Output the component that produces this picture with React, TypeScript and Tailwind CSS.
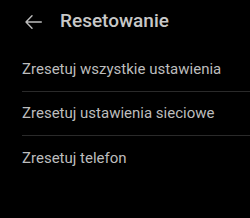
export default function App() {
  const items = ['Zresetuj wszystkie ustawienia', 'Zresetuj ustawienia sieciowe', 'Zresetuj telefon'];
  return (
    <div className="w-[250px] h-[218px] bg-black overflow-hidden" style={{ fontFamily: 'Roboto, "Noto Sans", sans-serif' }}>
      <div className="flex items-center h-[43px] pl-[25px]">
        <svg width="17" height="14" viewBox="0 0 17 14" fill="none" stroke="#bdbdbd" strokeWidth="1.4" strokeLinecap="round" strokeLinejoin="round">
          <path d="M16.3 7H1M7 0.8L1 7L7 13.2" />
        </svg>
        <span className="ml-[18px] text-[19px] font-medium text-[#c8c8c8]">Resetowanie</span>
      </div>
      <div className="pl-[22px] pt-[5px]">
        {items.map((t, i) => (
          <div key={t} className={`h-[44px] flex items-center text-[15px] text-[#bdbdbd] ${i < items.length - 1 ? 'border-b border-[#2a2a2a]' : ''}`}>
            {t}
          </div>
        ))}
      </div>
    </div>
  );
}
